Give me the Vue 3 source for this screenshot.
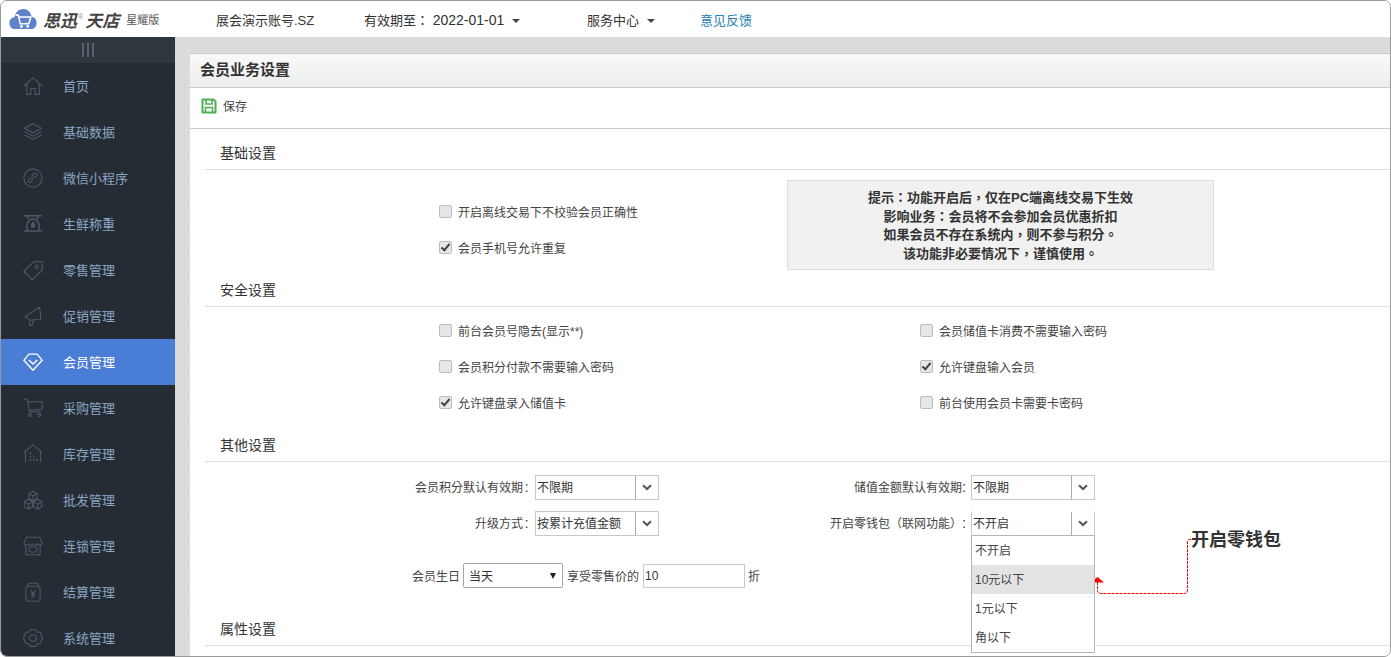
<template>
  <div class="window">
    <header class="topbar">
      <div class="logo">
        <svg class="logo-mark" viewBox="0 0 36 28" width="28" height="22">
          <path d="M8 27C3.500 27 0.500 23.500 0.500 19C0.500 15 3.300 12.300 7 11.800C8 5.500 12.500 1 18.500 1C24 1 28.300 5.300 29 11C33 11.500 35.500 15 35.500 19C35.500 23.500 32.300 27 28 27Z" fill="#5f83c9"/>
          <path d="M8.500 9H12L14.500 20H25.500L28 11.500H13" fill="none" stroke="#fff" stroke-width="2"/>
          <circle cx="16" cy="23.500" r="1.800" fill="#fff"/>
          <circle cx="24" cy="23.500" r="1.800" fill="#fff"/>
        </svg>
        <span class="logo-name">思迅<sup>®</sup>天店</span>
        <span class="logo-edition">星耀版</span>
      </div>
      <span class="account">展会演示账号.SZ</span>
      <span class="expiry">有效期至： <span class="date">2022-01-01</span><i class="caret"></i></span>
      <span class="service">服务中心<i class="caret"></i></span>
      <a class="feedback">意见反馈</a>
    </header>

    <div class="body">
      <aside class="sidebar">
        <div class="collapse"><i></i><i></i><i></i></div>
        <nav>
          <div v-for="item in navItems" :key="item.name" class="nav-item" :class="{ active: item.active }">
            <svg class="nav-icon" viewBox="0 0 24 24" fill="none" stroke="currentColor" stroke-width="1.300" v-html="item.icon"></svg>
            <span>{{ item.name }}</span>
          </div>
        </nav>
      </aside>

      <main class="main">
        <section class="panel">
          <h1 class="panel-title">会员业务设置</h1>
          <div class="toolbar">
            <svg viewBox="0 0 16 16" width="16" height="16" fill="none" stroke="#4caf50" stroke-width="2">
              <path d="M2 1.500H12.500L14.500 3.500V14.500H1.500V1.500Z" stroke-linejoin="round"/>
              <path d="M5 2V6H11V2M4.500 14V9.500H11.500V14" stroke-width="1.600"/>
            </svg>
            <span>保存</span>
          </div>

          <div class="content">
            <h2 class="section-title">基础设置</h2>
            <div class="basic">
              <div class="check-col">
                <label v-for="c in basicChecks" :key="c.text" class="check">
                  <input type="checkbox" :checked="c.on" />{{ c.text }}
                </label>
              </div>
              <div class="tip">
                <p>提示：功能开启后，仅在PC端离线交易下生效</p>
                <p>影响业务：会员将不会参加会员优惠折扣</p>
                <p>如果会员不存在系统内，则不参与积分。</p>
                <p>该功能非必要情况下，谨慎使用。</p>
              </div>
            </div>

            <h2 class="section-title">安全设置</h2>
            <div class="security">
              <label v-for="c in securityChecks" :key="c.text" class="check">
                <input type="checkbox" :checked="c.on" />{{ c.text }}
              </label>
            </div>

            <h2 class="section-title">其他设置</h2>
            <div class="others">
              <div class="field-grid">
                <div v-for="f in fields" :key="f.label" class="field">
                  <span class="field-label">{{ f.label }}<b>:</b></span>
                  <div class="combo" :class="{ open: f.open }">
                    <span class="combo-value">{{ f.value }}</span>
                    <span class="combo-btn">
                      <svg viewBox="0 0 10 7" width="10" height="7"><path d="M1 1.200L5 5L9 1.200" fill="none" stroke="#555" stroke-width="2"/></svg>
                    </span>
                    <ul v-if="f.open" class="dropdown">
                      <li v-for="o in walletOptions" :key="o" :class="{ hover: o === '10元以下' }">{{ o }}</li>
                    </ul>
                  </div>
                </div>
              </div>
              <div class="birthday">
                <span>会员生日</span>
                <div class="native-select">当天<i></i></div>
                <span>享受零售价的</span>
                <input class="discount" type="text" value="10" />
                <span>折</span>
              </div>
              <div class="note">
                <svg class="note-arrow" viewBox="0 0 104 66" width="104" height="66">
                  <path d="M100 1.500H99Q96.500 1.500 96.500 4V52Q96.500 55.500 93 55.500H10Q6.500 55.500 6.500 52V43" fill="none" stroke="#f00" stroke-dasharray="3 1"/>
                  <path d="M0 44.500L6.500 39L13 44.500Z" fill="#f00"/>
                </svg>
                <strong>开启零钱包</strong>
              </div>
            </div>

            <h2 class="section-title">属性设置</h2>
          </div>
        </section>
      </main>
    </div>
  </div>
</template>

<script setup>
const navItems = [
  { name: '首页', icon: '<path d="M1.500 12L12 2L22.500 12M4.500 10V22H9.500V15H14.500V22H19.500V10"/>' },
  { name: '基础数据', icon: '<path d="M12 2L22 7.500L12 13L2 7.500Z"/><path d="M2 11.500L12 17L22 11.500M2 15.500L12 21L22 15.500"/>' },
  { name: '微信小程序', icon: '<circle cx="12" cy="12" r="11"/><path d="M16.500 6.500C14 5 11 7 11 9.500V14.500C11 17 8.500 18.500 7 17C5.500 15.500 7 12.500 9.500 12.500M13 11.500C15.500 11.500 17.500 9 16.500 6.500"/>' },
  { name: '生鲜称重', icon: '<path d="M1 2H23M1 20.500H23M5 2L7 6M19 2L17 6M6 20.500C2 13 7 6 12 6C17 6 22 13 18 20.500" stroke-width="1.800"/><path d="M12 9.500C10.500 12 10 13 10 14A2 2 0 0 0 14 14C14 13 13.500 12 12 9.500Z" fill="currentColor"/>' },
  { name: '零售管理', icon: '<path d="M13 2H23V12L11 23.500L1 13.500Z" stroke-linejoin="round"/><circle cx="16.500" cy="8" r="2"/>' },
  { name: '促销管理', icon: '<path d="M2.500 13L19.500 1.500C20.500 3 21.500 12 21 15.500L8.500 17L2.500 13ZM8.500 17L7.500 23H11L12.500 16.500" stroke-linejoin="round"/>' },
  { name: '会员管理', active: true, icon: '<path d="M7 2.500H17L23 10L12 22L1 10Z" stroke-width="1.700" stroke-linejoin="round"/><path d="M7 9.500L12 14.500L17 9.500" stroke-width="1.700"/>' },
  { name: '采购管理', icon: '<path d="M1 1.500H5L8 16.500H21M6 4.500H23V13.500L7.500 15"/><circle cx="8.500" cy="20.500" r="1.800"/><circle cx="19.500" cy="20.500" r="1.800"/>' },
  { name: '库存管理', icon: '<path d="M1 10L12 1L23 10M3 9V22M21 9V22"/><path d="M8 11H10M8 15H10M8 19H10M12 15H14M12 19H14M16 19H18" stroke-width="2"/>' },
  { name: '批发管理', icon: '<path d="M12 1.500L17 4.500V10L12 13L7 10V4.500ZM6.500 11L11.500 14V20L6.500 23L1.500 20V14ZM17.500 11L22.500 14V20L17.500 23L12.500 20V14Z" stroke-linejoin="round"/><path d="M7 4.500L12 7.200L17 4.500M12 7.200V13M1.500 14L6.500 17L11.500 14M6.500 17V23M12.500 14L17.500 17L22.500 14M17.500 17V23"/>' },
  { name: '连锁管理', icon: '<path d="M4 1.500H20L23 9C22 11.500 19 11.500 17.500 9.500C16 11.500 14 11.500 12 9.500C10 11.500 8 11.500 6.500 9.500C5 11.500 2 11.500 1 9ZM3.500 11V22.500H20.500V11"/><ellipse cx="12" cy="16" rx="5" ry="3.500"/>' },
  { name: '结算管理', icon: '<path d="M5 6C5 3 7 1.500 10 1.500H17L19 4"/><rect x="3.500" y="5" width="17" height="18" rx="3"/><path d="M9 10L12 13.500L15 10M12 13.500V19M9.500 14.500H14.500M9.500 17H14.500"/>' },
  { name: '系统管理', icon: '<path d="M8.500 2H15.500L17 5L20.500 5L23.500 12L20.500 18.500L17 19L15.500 22H8.500L7 19L3.500 18.500L0.500 12L3.500 5L7 5Z" stroke-linejoin="round"/><circle cx="12" cy="12" r="4"/>' }
]

const basicChecks = [
  { text: '开启离线交易下不校验会员正确性', on: false },
  { text: '会员手机号允许重复', on: true }
]

const securityChecks = [
  { text: '前台会员号隐去(显示**)', on: false },
  { text: '会员储值卡消费不需要输入密码', on: false },
  { text: '会员积分付款不需要输入密码', on: false },
  { text: '允许键盘输入会员', on: true },
  { text: '允许键盘录入储值卡', on: true },
  { text: '前台使用会员卡需要卡密码', on: false }
]

const fields = [
  { label: '会员积分默认有效期', value: '不限期' },
  { label: '储值金额默认有效期', value: '不限期' },
  { label: '升级方式', value: '按累计充值金额' },
  { label: '开启零钱包（联网功能）', value: '不开启', open: true }
]

const walletOptions = ['不开启', '10元以下', '1元以下', '角以下']
</script>

<style>
html, body { margin: 0; background: #fff; }
</style>

<style scoped>
.window {
  width: 1391px;
  height: 657px;
  box-sizing: border-box;
  border: 1px solid #999;
  border-radius: 7px;
  overflow: hidden;
  display: flex;
  flex-direction: column;
  font-family: "Liberation Sans", "Noto Sans CJK SC", sans-serif;
  font-size: 12px;
  color: #333;
}

.topbar {
  flex: none;
  height: 36px;
  display: flex;
  align-items: center;
  background: #fff;
  font-size: 13px;
}
.logo { width: 215px; display: flex; align-items: center; flex: none; }
.logo-mark { margin-left: 8px; flex: none; }
.logo-name {
  margin-left: 6px;
  font-size: 17px;
  font-weight: 700;
  font-style: italic;
  color: #444;
  white-space: nowrap;
}
.logo-name sup { font-size: 7px; font-style: normal; font-weight: 400; color: #888; vertical-align: 8px; line-height: 0; margin: 0 2px 0 1px; }
.logo-edition { margin-left: 7px; font-size: 11px; color: #555; white-space: nowrap; }
.account { width: 148px; flex: none; }
.expiry { width: 223px; flex: none; font-family: "Liberation Sans", "Noto Sans CJK TC", sans-serif; }
.date { font-size: 14px; }
.service { width: 113px; flex: none; }
.feedback { color: #2a7fb8; }
.caret {
  display: inline-block;
  width: 0;
  height: 0;
  margin-left: 8px;
  vertical-align: middle;
  border: 4px solid transparent;
  border-top-color: #444;
  border-bottom-width: 0;
}

.body { flex: 1; display: flex; min-height: 0; }

.sidebar { width: 174px; flex: none; background: #262c33; }
.collapse {
  height: 26px;
  background: #2f363e;
  display: flex;
  justify-content: center;
  align-items: center;
  gap: 3px;
}
.collapse i { width: 2px; height: 14px; background: #59636d; }
.nav-item {
  height: 46px;
  display: flex;
  align-items: center;
  color: #8ba5c4;
  font-size: 13px;
}
.nav-item span { margin-bottom: 1px; }
.nav-icon { width: 20px; height: 20px; margin-left: 22px; margin-right: 20px; color: #4d5a66; flex: none; }
.nav-item.active { background: #4a7dd6; color: #fff; }
.nav-item.active .nav-icon { color: #fff; }

.main {
  flex: 1;
  min-width: 0;
  padding: 16px 0 0 15px;
  background-color: #dcdcdc;
  background-image:
    repeating-linear-gradient(0deg, rgba(255,255,255,.12) 0 1px, transparent 1px 3px),
    repeating-linear-gradient(90deg, rgba(0,0,0,.03) 0 1px, transparent 1px 3px);
  overflow: hidden;
}
.panel { height: 100%; background: #fff; border-top: 1px solid #c8c8c8; position: relative; }
.panel-title {
  margin: 0;
  height: 33px;
  padding-left: 10px;
  line-height: 31px;
  font-size: 15px;
  font-weight: 700;
  color: #333;
  background: linear-gradient(#f9f9f9, #ededed);
  border-bottom: 1px solid #ccc;
}
.toolbar {
  height: 41px;
  box-sizing: border-box;
  padding: 0 0 5px 11px;
  display: flex;
  align-items: center;
  gap: 6px;
  border-bottom: 1px solid #ccc;
  color: #444;
}
.content { padding-left: 15px; }
.section-title {
  margin: 0;
  height: 41px;
  box-sizing: border-box;
  padding: 14px 0 0 15px;
  line-height: 20px;
  font-size: 14px;
  font-weight: 400;
  color: #333;
  border-bottom: 1px solid #e0e0e0;
}

.basic { height: 96px; position: relative; display: flex; }
.check {
  display: flex;
  align-items: center;
  height: 36px;
  color: #444;
  white-space: nowrap;
}
.check input {
  appearance: none;
  position: relative;
  width: 13px;
  height: 13px;
  box-sizing: border-box;
  margin: 0 6px 0 0;
  background: #e6e6e6;
  border: 1px solid #bdbdbd;
  border-radius: 2px;
}
.check input:checked::after {
  content: "";
  position: absolute;
  left: 3px;
  top: 0;
  width: 3px;
  height: 7px;
  border: solid #444;
  border-width: 0 2px 2px 0;
  transform: rotate(40deg);
}
.check-col { margin: 23px 0 0 234px; width: 348px; flex: none; }
.tip {
  align-self: flex-start;
  margin-top: 10px;
  width: 427px;
  height: 90px;
  box-sizing: border-box;
  padding-top: 8px;
  background: #f1f1f1;
  border: 1px solid #ddd;
  text-align: center;
  font-family: "Liberation Sans", "Noto Sans CJK TC", sans-serif;
  font-size: 13px;
  font-weight: 700;
  line-height: 18.500px;
  color: #333;
}
.tip p { margin: 0; }

.security {
  height: 114px;
  box-sizing: border-box;
  padding: 5px 0 0 234px;
  display: grid;
  grid-template-columns: 481px 1fr;
  grid-auto-rows: 36px;
}

.others { position: relative; height: 143px; }
.field-grid {
  display: grid;
  grid-template-columns: 436px 436px;
  grid-auto-rows: 36px;
  padding: 13px 0 0 18px;
}
.field { display: flex; align-items: center; justify-content: flex-end; height: 25px; }
.field-label {
  margin: 0 5px 2px 0;
  font-family: "Liberation Sans", "Noto Sans CJK TC", sans-serif;
  color: #444;
  white-space: nowrap;
}
.field-label b { display: inline-block; width: 7px; font-size: 15px; font-weight: 400; text-align: center; line-height: 12px; }
.field:nth-child(even) .field-label b { width: 4px; text-align: right; }
.combo {
  position: relative;
  width: 124px;
  height: 25px;
  box-sizing: border-box;
  display: flex;
  align-items: center;
  border: 1px solid #c8c8c8;
  background: #fff;
}
.combo.open { border-top-color: transparent; }
.combo-value { flex: 1; margin-bottom: 2px; padding-left: 1px; color: #333; white-space: nowrap; }
.combo-btn {
  width: 22px;
  height: 100%;
  display: flex;
  align-items: center;
  justify-content: center;
  border-left: 1px solid #aaa;
}
.dropdown {
  position: absolute;
  left: -1px;
  top: 23px;
  z-index: 2;
  width: 124px;
  box-sizing: border-box;
  margin: 0;
  padding: 0;
  list-style: none;
  background: #fff;
  border: 1px solid #b5b5b5;
}
.dropdown li { height: 29px; line-height: 31px; padding-left: 3px; color: #444; }
.dropdown li.hover { background: #e3e3e3; }

.birthday {
  display: flex;
  align-items: center;
  height: 25px;
  margin-top: 16px;
  padding-left: 207px;
  color: #444;
}
.native-select {
  width: 100px;
  height: 25px;
  box-sizing: border-box;
  margin: 0 4px 0 3px;
  padding-left: 5px;
  display: flex;
  align-items: center;
  justify-content: space-between;
  border: 1px solid #a6a6a6;
  border-radius: 2px;
  color: #333;
}
.native-select i {
  width: 0;
  height: 0;
  margin-right: 6px;
  border: 3px solid transparent;
  border-top: 6px solid #222;
  border-bottom: 0;
}
.discount {
  width: 102px;
  height: 24px;
  box-sizing: border-box;
  margin: 0 3px 0 4px;
  padding: 0 1px;
  border: 1px solid #c8c8c8;
  font: inherit;
  color: #333;
  outline: none;
}

.note { position: absolute; left: 886px; top: 62px; width: 200px; height: 70px; }
.note-arrow { position: absolute; left: 0; top: 14px; }
.note strong {
  position: absolute;
  left: 100px;
  top: 3px;
  font-size: 18px;
  line-height: 26px;
  color: #333;
  white-space: nowrap;
}
</style>
